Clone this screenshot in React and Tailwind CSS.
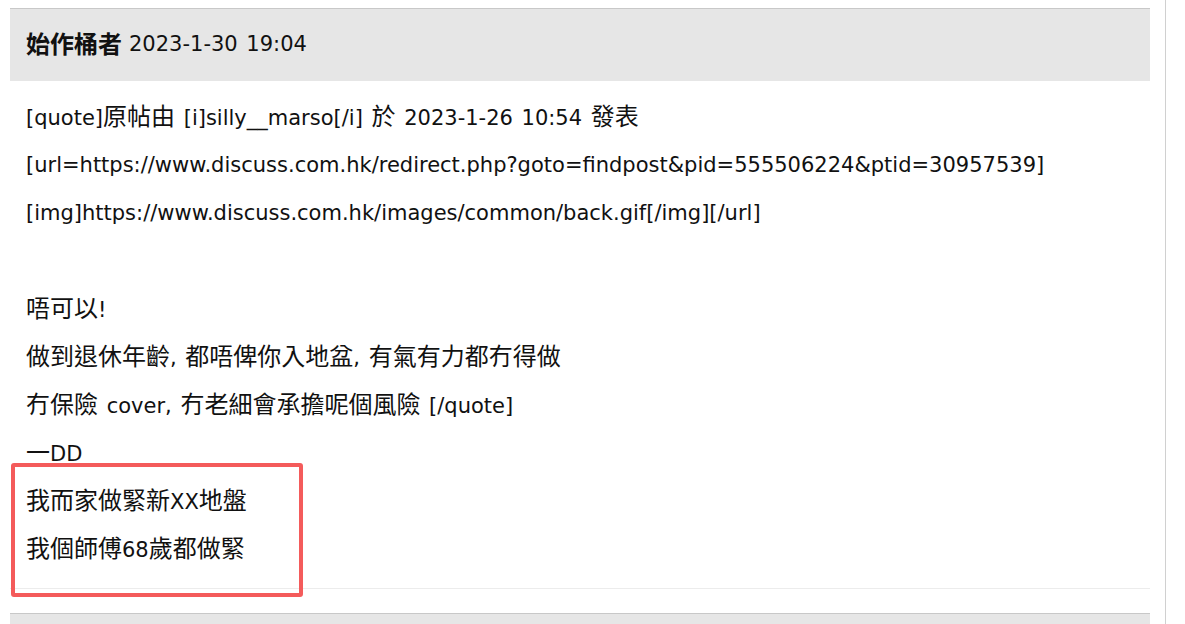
import React from 'react';

const lines = [
  '[quote]原帖由 [i]silly__marso[/i] 於 2023-1-26 10:54 發表',
  '[url=https://www.discuss.com.hk/redirect.php?goto=findpost&pid=555506224&ptid=30957539]',
  '[img]https://www.discuss.com.hk/images/common/back.gif[/img][/url]',
  '',
  '唔可以!',
  '做到退休年齡, 都唔俾你入地盆, 有氣有力都冇得做',
  '冇保險 cover, 冇老細會承擔呢個風險 [/quote]',
  '一DD',
  '我而家做緊新XX地盤',
  '我個師傅68歲都做緊',
];

// CJK glyphs in the shot run a little wider than the latin ones
const Mixed = ({ text }) =>
  text.split(/([\u3000-\u9fff\uff00-\uffef]+)/).map((part, i) =>
    /[\u3000-\u9fff\uff00-\uffef]/.test(part) ? (
      <span key={i} className="text-[24px]">{part}</span>
    ) : (
      <span key={i}>{part}</span>
    )
  );

export default function App() {
  return (
    <div
      className="w-[1185px] h-[624px] overflow-hidden bg-white flex text-[#111] [word-spacing:2px]"
      style={{ fontFamily: '"DejaVu Sans", "Noto Sans CJK TC", sans-serif' }}
    >
      <div className="w-[1165px] pt-2 pl-[10px] pr-[15px]">
        <div className="border-t border-[#c8c8c8] bg-[#e6e6e6] h-[73px] flex items-center px-[16px] text-[21px]">
          <span className="font-bold"><Mixed text="始作桶者" /></span>
          <span className="ml-[7px]">2023-1-30 19:04</span>
        </div>
        <div className="relative pt-[12px] pl-[16px] pb-[15px] border-b border-[#ececec] text-[21px] leading-[48px]">
          {lines.map((l, i) => (
            <div key={i} className="h-[48px] whitespace-nowrap"><Mixed text={l} /></div>
          ))}
          <div className="absolute left-[1px] top-[382px] w-[292px] h-[134px] border-4 border-[#f45b5b] rounded-[3px]" />
        </div>
        <div className="mt-[24px] border-t border-[#c8c8c8] bg-[#e6e6e6] h-[20px]" />
      </div>
      <div className="w-px bg-[#d0d0d0] h-full" />
      <div className="flex-1 bg-white" />
    </div>
  );
}
